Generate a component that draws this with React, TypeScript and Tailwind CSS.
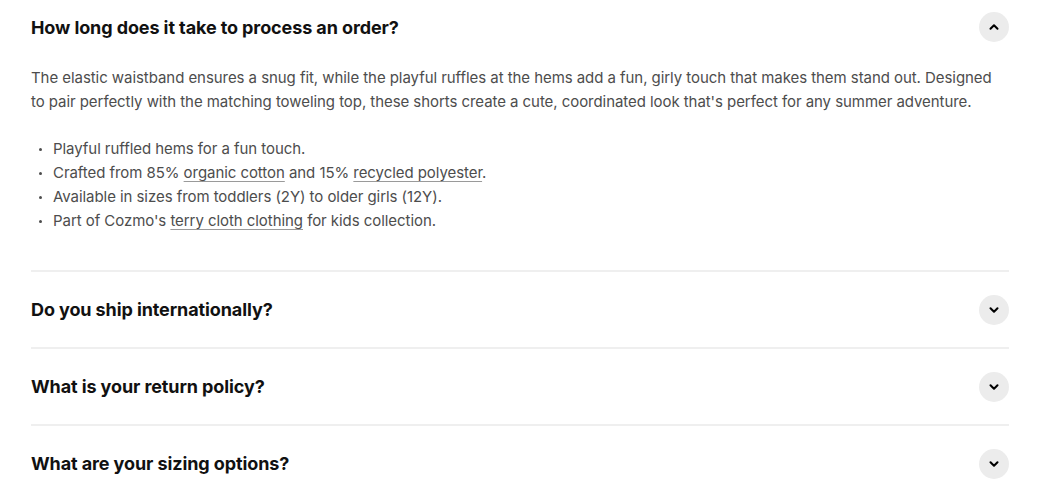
import { ChevronDown, ChevronUp } from 'lucide-react';

const faqs = [
  'Do you ship internationally?',
  'What is your return policy?',
  'What are your sizing options?',
];

function Toggle({ open }: { open?: boolean }) {
  const Icon = open ? ChevronUp : ChevronDown;
  return (
    <span className="w-[30px] h-[30px] rounded-full bg-[#ececec] flex items-center justify-center shrink-0">
      <Icon className="w-[14px] h-[14px] text-black" strokeWidth={3.5} />
    </span>
  );
}

function Link({ children }: { children: React.ReactNode }) {
  return (
    <a className="underline decoration-[#9a9a9a] underline-offset-[3px] decoration-1">{children}</a>
  );
}

const bullets: React.ReactNode[] = [
  <>Playful ruffled hems for a fun touch.</>,
  <>
    Crafted from 85% <Link>organic cotton</Link> and 15% <Link>recycled polyester</Link>.
  </>,
  <>Available in sizes from toddlers (2Y) to older girls (12Y).</>,
  <>
    Part of Cozmo's <Link>terry cloth clothing</Link> for kids collection.
  </>,
];

export default function App() {
  return (
    <div className="w-full min-h-screen bg-white pl-[31px] pr-[37px] font-['Inter',sans-serif]">
      <div className="pb-[37px]">
        <div className="h-[54px] flex items-center justify-between">
          <h3 className="text-[18px] font-bold text-[#111] tracking-[-0.1px]">How long does it take to process an order?</h3>
          <Toggle open />
        </div>
        <div className="pt-[12px] text-[15px] leading-[24px] text-[#4d4d4d] tracking-[-0.06px]">
          <p>
            The elastic waistband ensures a snug fit, while the playful ruffles at the hems add a fun, girly touch that makes them stand out. Designed
            <br />
            to pair perfectly with the matching toweling top, these shorts create a cute, coordinated look that's perfect for any summer adventure.
          </p>
          <ul className="mt-[23px] pl-[8px]">
            {bullets.map((b, i) => (
              <li key={i} className="flex items-center">
                <span className="w-[3px] h-[3px] rounded-full bg-[#4d4d4d] mr-[11px] shrink-0" />
                <span>{b}</span>
              </li>
            ))}
          </ul>
        </div>
      </div>
      {faqs.map((q) => (
        <div key={q} className="border-t-2 border-[#efefef] h-[77px] flex items-center justify-between">
          <h3 className="text-[18px] font-bold text-[#111] tracking-[-0.1px]">{q}</h3>
          <Toggle />
        </div>
      ))}
    </div>
  );
}
